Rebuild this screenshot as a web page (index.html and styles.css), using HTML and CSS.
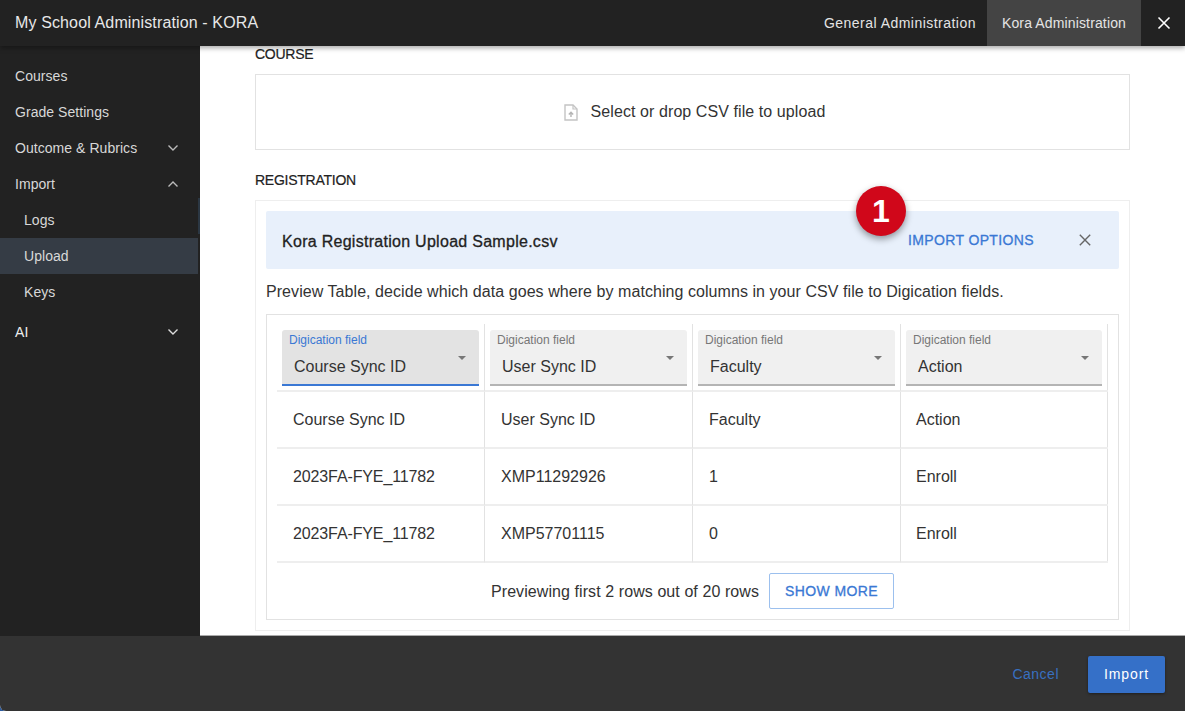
FILE: index.html
```html
<!DOCTYPE html>
<html lang="en">
<head>
<meta charset="utf-8">
<title>My School Administration - KORA</title>
<link rel="stylesheet" href="styles.css">
</head>
<body>
<div class="app">
  <header class="topbar">
    <h1 class="title">My School Administration - KORA</h1>
    <nav class="tabs">
      <a class="tab">General Administration</a>
      <a class="tab tab-active">Kora Administration</a>
    </nav>
    <button class="close-app" aria-label="Close">
      <svg width="14" height="14" viewBox="0 0 14 14"><path d="M1.5 1.5l11 11M12.5 1.5l-11 11" stroke="#fff" stroke-width="1.6" fill="none"/></svg>
    </button>
  </header>
  <div class="middle">
    <aside class="sidebar">
      <a class="nav-item">Courses</a>
      <a class="nav-item">Grade Settings</a>
      <a class="nav-item">Outcome &amp; Rubrics
        <svg class="chev" width="12" height="8" viewBox="0 0 12 8"><path d="M1.5 1.5L6 6l4.5-4.5" stroke="#bbb" stroke-width="1.4" fill="none"/></svg>
      </a>
      <a class="nav-item">Import
        <svg class="chev" width="12" height="8" viewBox="0 0 12 8"><path d="M1.5 6.5L6 2l4.5 4.5" stroke="#bbb" stroke-width="1.4" fill="none"/></svg>
      </a>
      <a class="nav-item nav-sub">Logs</a>
      <a class="nav-item nav-sub nav-current">Upload</a>
      <a class="nav-item nav-sub">Keys</a>
      <a class="nav-item nav-ai">AI
        <svg class="chev" width="12" height="8" viewBox="0 0 12 8"><path d="M1.5 1.5L6 6l4.5-4.5" stroke="#ddd" stroke-width="1.4" fill="none"/></svg>
      </a>
      <i class="side-thumb"></i>
    </aside>
    <main class="content">
      <h2 class="section-label section-first">COURSE</h2>
      <div class="dropzone">
        <svg class="file-icon" width="14" height="17" viewBox="0 0 14 17"><path d="M1 1h8l4 4v11H1z" fill="#fff" stroke="#c4c4c4" stroke-width="1.4"/><path d="M9 1v4h4" fill="none" stroke="#c4c4c4" stroke-width="1.2"/><path d="M7 13V8.5M4.8 10.5L7 8.2l2.2 2.3" fill="none" stroke="#b5b5b5" stroke-width="1.4"/></svg>
        <span>Select or drop CSV file to upload</span>
      </div>
      <h2 class="section-label">REGISTRATION</h2>
      <section class="reg-box">
        <div class="banner">
          <span class="file-name">Kora Registration Upload Sample.csv</span>
          <a class="import-options">IMPORT OPTIONS</a>
          <button class="banner-close" aria-label="Remove">
            <svg width="12" height="12" viewBox="0 0 12 12"><path d="M.8.8l10.4 10.4M11.2.8L.8 11.2" stroke="#666" stroke-width="1.4" fill="none"/></svg>
          </button>
          <span class="badge">1</span>
        </div>
        <p class="hint">Preview Table, decide which data goes where by matching columns in your CSV file to Digication fields.</p>
        <div class="table-box">
          <div class="grid">
            <div class="cell head-cell"><div class="select select-focus"><span class="sel-label">Digication field</span><span class="sel-value">Course Sync ID</span><i class="caret"></i></div></div>
            <div class="cell head-cell"><div class="select"><span class="sel-label">Digication field</span><span class="sel-value">User Sync ID</span><i class="caret"></i></div></div>
            <div class="cell head-cell"><div class="select"><span class="sel-label">Digication field</span><span class="sel-value">Faculty</span><i class="caret"></i></div></div>
            <div class="cell head-cell"><div class="select"><span class="sel-label">Digication field</span><span class="sel-value">Action</span><i class="caret"></i></div></div>
            <div class="cell">Course Sync ID</div><div class="cell">User Sync ID</div><div class="cell">Faculty</div><div class="cell">Action</div>
            <div class="cell cell-id">2023FA-FYE_11782</div><div class="cell">XMP11292926</div><div class="cell">1</div><div class="cell">Enroll</div>
            <div class="cell cell-id">2023FA-FYE_11782</div><div class="cell">XMP57701115</div><div class="cell">0</div><div class="cell">Enroll</div>
          </div>
          <div class="table-foot">
            <span class="foot-text">Previewing first 2 rows out of 20 rows</span>
            <button class="show-more">SHOW MORE</button>
          </div>
        </div>
      </section>
    </main>
  </div>
  <footer class="footer">
    <a class="cancel">Cancel</a>
    <button class="primary">Import</button>
  </footer>
</div>
</body>
</html>
```
FILE: styles.css
```css
* { box-sizing: border-box; }
html, body { margin: 0; height: 100%; background: #2e5c9e; overflow: hidden; }
body { font-family: "Liberation Sans", Arial, sans-serif; color: #222; }
button { font-family: inherit; cursor: pointer; }
.app { width: 1185px; height: 711px; display: flex; flex-direction: column; border-radius: 0 0 0 6px; overflow: hidden; background: #fff; }

.topbar { height: 46px; flex: none; display: flex; align-items: stretch; background: #222; color: #eee; position: relative; z-index: 2; box-shadow: 0 2px 5px rgba(0,0,0,.35); }
.title { margin: 0 auto 0 15px; font-size: 16px; font-weight: 400; line-height: 45px; color: #e8e8e8; letter-spacing: .13px; }
.tabs { display: flex; }
.tab { display: flex; align-items: center; padding: 0 11px 1px 15px; font-size: 14px; color: #e4e4e4; letter-spacing: .47px; }
.tab-active { background: #444; padding: 0 15px 1px; letter-spacing: .14px; }
.close-app { width: 44px; border: 0; background: none; padding: 0 0 0 2px; display: flex; align-items: center; justify-content: center; }

.middle { flex: 1; min-height: 0; display: flex; }
.sidebar { width: 200px; flex: none; background: #222; padding: 12px 2px 0 0; position: relative; }
.nav-item { height: 36px; display: flex; align-items: center; justify-content: space-between; padding: 0 19px 0 15px; font-size: 14px; color: #d8d8d8; letter-spacing: .05px; }
.nav-sub { padding-left: 24px; }
.nav-current { background: #353c45; }
.nav-ai { margin-top: 4px; color: #eee; }
.chev { flex: none; }
.side-thumb { position: absolute; right: 0; top: 152px; width: 2px; height: 36px; background: #2b3743; }

.content { flex: 1; min-width: 0; overflow: hidden; padding: 0 55px; background: #fff; border-bottom: 1px solid #aaa; }
.section-label { margin: 0; font-size: 14px; line-height: 16px; font-weight: 400; color: #222; letter-spacing: -.25px; -webkit-text-stroke: .2px #222; }
.section-first { margin: 0 0 12px; }
.dropzone { height: 76px; border: 1px solid #e2e2e2; display: flex; align-items: center; justify-content: center; gap: 13px; font-size: 16px; letter-spacing: .08px; color: #333; margin: 0 0 22px; padding: 0 0 0 4px; }
.file-icon { flex: none; }
.reg-box { margin-top: 12px; border: 1px solid #eee; height: 431px; padding: 10px; }
.banner { height: 58px; background: #e8f0fb; border-radius: 2px; display: flex; align-items: center; padding: 0 28px 0 16px; position: relative; }
.file-name { font-size: 16px; padding-top: 3px; letter-spacing: .28px; -webkit-text-stroke: .3px #222; color: #222; margin-right: auto; }
.import-options { font-size: 14px; letter-spacing: .37px; color: #3a78d4; margin-right: 45px; -webkit-text-stroke: .3px #3a78d4; }
.banner-close { border: 0; background: none; padding: 0; display: flex; }
.badge { position: absolute; left: 590px; top: -25px; width: 50px; height: 50px; border-radius: 50%; background: #d0071a; color: #fff; font-size: 32px; font-weight: 700; display: flex; align-items: center; justify-content: center; box-shadow: 0 3px 7px rgba(0,0,0,.4); }
.hint { margin: 13px 0 12px; font-size: 16px; line-height: 20px; letter-spacing: .06px; color: #333; }
.table-box { border: 1px solid #e2e2e2; height: 306px; padding: 9px 10px 0; }
.grid { display: grid; grid-template-columns: 208px 208px 208px 207px; grid-template-rows: 68px 57px 57px 57px; border-right: 1px solid #e2e2e2; }
.cell { display: flex; align-items: center; padding-left: 16px; font-size: 16px; color: #333; border-bottom: 2px solid #eee; border-right: 1px solid #e2e2e2; }
.cell:nth-child(4n) { border-right: 0; padding-left: 15px; }
.cell-id { letter-spacing: -.12px; }
.cell.head-cell { align-items: flex-start; padding: 6px 5px 0; }
.select { width: 197px; height: 56px; background: #f0f0f0; border-bottom: 2px solid #b4b4b4; border-radius: 3px 3px 0 0; position: relative; padding: 3px 7px 0 7px; }
.head-cell:nth-child(4) .select { width: 196px; }
.select-focus { background: #e3e3e3; border-bottom-color: #3a78d4; }
.sel-label { display: block; font-size: 12px; line-height: 15px; color: #777; }
.select-focus .sel-label { color: #3a78d4; }
.sel-value { display: block; margin: 9px 0 0 5px; font-size: 16px; line-height: 20px; color: #333; }
.caret { position: absolute; right: 13px; top: 26px; border: 4px solid transparent; border-top-color: #777; border-bottom: 0; }
.table-foot { height: 56px; display: flex; align-items: center; justify-content: center; gap: 10px; font-size: 16px; color: #333; }
.foot-text { letter-spacing: .08px; padding-top: 1px; }
.show-more { width: 125px; height: 36px; background: #fff; border: 1px solid #9cc0ee; border-radius: 2px; color: #3a78d4; font-size: 14px; letter-spacing: .4px; -webkit-text-stroke: .3px #3a78d4; }

.footer { height: 75px; flex: none; background: #333; display: flex; align-items: center; justify-content: flex-end; padding: 1px 20px 0 0; gap: 29px; }
.cancel { font-size: 14px; letter-spacing: .5px; color: #3870c0; }
.primary { width: 77px; height: 37px; border: 0; border-radius: 2px; background: #3570c8; color: #fff; font-size: 14px; letter-spacing: .9px; box-shadow: 0 1px 3px rgba(0,0,0,.4); }
```
